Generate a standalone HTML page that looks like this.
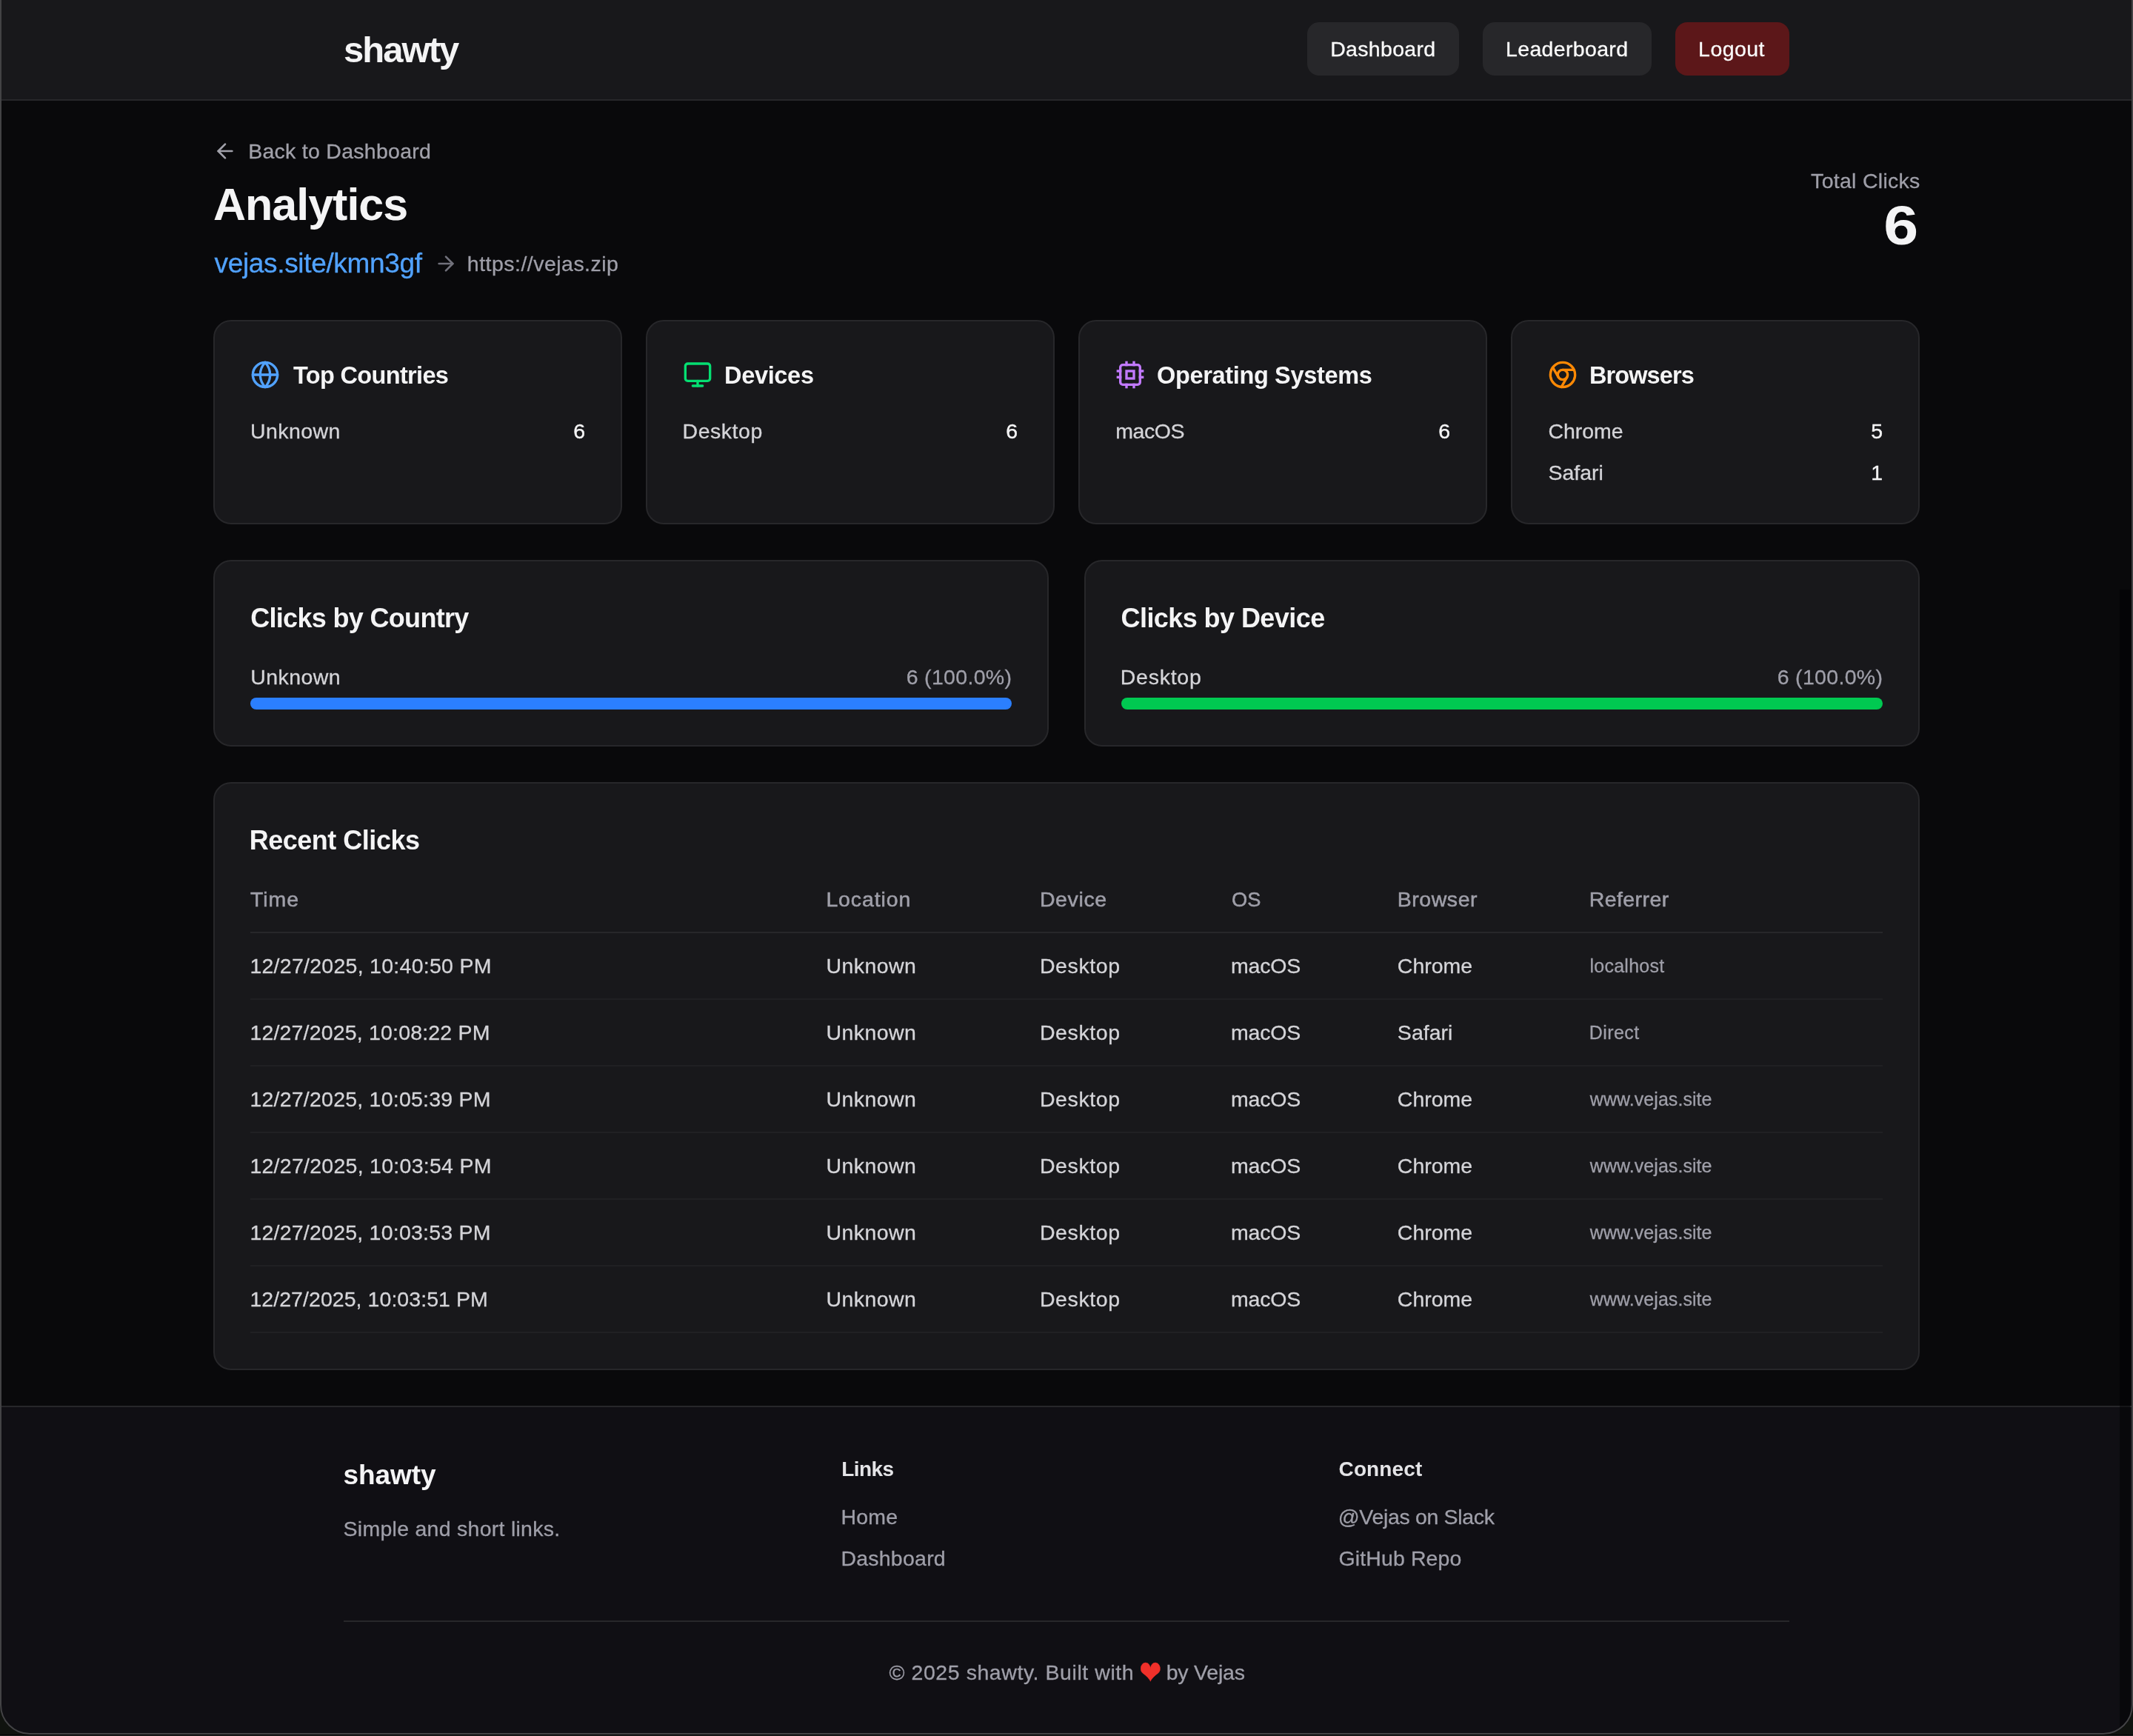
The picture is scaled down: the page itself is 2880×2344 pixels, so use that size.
<!DOCTYPE html>
<html lang="en">
<head>
<meta charset="utf-8">
<title>Analytics - shawty</title>
<style>
*{box-sizing:border-box;margin:0;padding:0}
html,body{width:2880px;height:2344px;background:#10130f;overflow:hidden}
body{font-family:"Liberation Sans",sans-serif;color:#f4f4f5;-webkit-font-smoothing:antialiased}
a{color:inherit;text-decoration:none}
#win{will-change:transform;position:absolute;left:0;top:0;width:2880px;height:2342px;background:#09090b;overflow:hidden;border-radius:0 0 40px 40px}
#frame{position:absolute;left:0;top:-4px;width:2880px;height:2346px;border:2px solid #434345;border-radius:0 0 40px 40px;pointer-events:none;z-index:10}
#edge{position:absolute;left:0;top:2342px;width:2880px;height:2px;background:linear-gradient(#000 50%,#222 50%)}
#track{position:absolute;left:2862px;top:796px;width:14px;height:1546px;background:rgba(0,0,0,.45);z-index:5}
.t{display:inline-block;white-space:nowrap}
/* header */
header{height:136px;background:#18181b;border-bottom:2px solid #27272a}
.hwrap{width:2048px;margin:0 auto;padding:0 48px;height:134px;display:flex;align-items:center;justify-content:space-between}
.logo{font-size:49px;line-height:64px;font-weight:700;color:#f4f4f5}
nav{display:flex;gap:32px;position:relative;top:-1px}
.btn{height:72px;border-radius:16px;background:#27272a;font-size:28.5px;line-height:40px;padding:16px 0;text-align:center;color:#fafafa}
.btn.red{background:#5c1719}
/* main */
main{width:2304px;margin:0 auto;padding:48px 0}
.top{display:flex;align-items:center;justify-content:space-between;margin-bottom:48px}
.back{display:flex;align-items:center;height:40px;font-size:28.5px;line-height:40px;color:#a1a1aa;margin-bottom:16px}
.back svg{width:32px;height:32px;margin-right:16px}
h1{font-size:61px;line-height:72px;font-weight:700;color:#f4f4f5}
.linkrow{display:flex;align-items:center;height:56px;margin-top:16px}
.linkrow .short{font-size:37px;line-height:56px;color:#51a2ff}
.linkrow svg{width:32px;height:32px;margin:0 16px;color:#71717b}
.linkrow .dest{font-size:28.5px;line-height:40px;color:#9f9fa9}
.total{text-align:right}
.total .lbl{font-size:28.5px;line-height:40px;color:#9f9fa9;display:block}
.total .num{font-size:74px;line-height:80px;font-weight:700;color:#f4f4f5;display:block}
.card{background:#18181b;border:2px solid #27272a;border-radius:24px;padding:48px}
.g4{display:grid;grid-template-columns:repeat(4,552px);gap:32px;margin-bottom:48px}
.g4 .card{height:276px}
.chead{display:flex;align-items:center;height:48px;margin-bottom:32px;font-size:32.5px;line-height:48px;font-weight:700;color:#f4f4f5}
.chead svg{width:40px;height:40px;margin-right:16px}
.row{display:flex;justify-content:space-between;height:40px;font-size:28.5px;line-height:40px;color:#d4d4d8}
.row+.row{margin-top:16px}
.row b{font-weight:400;color:#f4f4f5}
.g2{display:grid;grid-template-columns:repeat(2,1128px);gap:48px;margin-bottom:48px}
.g2 .card{height:252px}
h2 .t,.chead .t{position:relative;top:1px}
h2{font-size:36px;line-height:56px;font-weight:700;color:#f4f4f5;margin-bottom:32px}
.brow{display:flex;justify-content:space-between;height:40px;font-size:28.5px;line-height:40px;color:#d4d4d8;margin-bottom:8px}
.brow i{font-style:normal;color:#9f9fa9}
.bar{height:16px;border-radius:8px;background:#2b7fff}
.bar.g{background:#00c951}
.tcard{height:794px}
table{border-collapse:collapse;width:2204px;table-layout:fixed}
th{vertical-align:top;text-align:left;font-weight:400;font-size:28.5px;line-height:40px;color:#9f9fa9;padding:0 0 24px;border-bottom:2px solid #27272a;height:65px}
td{font-size:28.5px;line-height:40px;color:#d4d4d8;padding:24px 0;border-bottom:2px solid #202023;height:90px}
td.ref{font-size:25px;color:#9f9fa9}
/* footer */
footer{position:absolute;left:0;top:1898px;width:2880px;height:444px;background:#100f14;border-top:2px solid #27272a}
.fwrap{width:2048px;margin:0 auto;padding:64px 48px 0}
.fgrid{display:grid;grid-template-columns:repeat(3,608px);gap:64px;height:160px}
.flogo{font-size:37px;line-height:56px;font-weight:700;color:#f4f4f5;display:block;margin-bottom:24px}
.fdesc{font-size:28.5px;line-height:40px;color:#9f9fa9}
.fh{font-size:28px;line-height:40px;font-weight:700;color:#e4e4e7;display:block;margin-bottom:24px}
.fl{font-size:28.5px;line-height:40px;color:#9f9fa9;display:block;height:40px}
.fl+.fl{margin-top:16px}
.copy{margin-top:64px;border-top:2px solid #27272a;padding-top:48px;display:flex;padding-left:736px;font-size:28.5px;line-height:40px;color:#9f9fa9}
.heart{color:#f0302a;font-family:"DejaVu Sans",sans-serif;font-size:36px;line-height:40px;margin:0 6.5px 0 7px;vertical-align:top;position:relative;top:1px;transform:scaleY(1.25);transform-origin:50% 52%}

body{-webkit-text-stroke:.3px}
.logo,h1,h2,.chead,.total .num,.flogo,.fh{-webkit-text-stroke:0}
/* tuned letter-spacing */
th .t{-webkit-text-stroke:.55px currentColor}
.row b .t{-webkit-text-stroke:.4px currentColor}
#tnum{position:relative;top:1px;transform:scaleX(1.14);transform-origin:100% 50%;margin-right:1.5px}
/*TUNE*/
#logo{letter-spacing:-1.98px;margin-left:0.00px;}
#b1{letter-spacing:0.32px;margin-left:-0.32px;}
#b2{letter-spacing:0.34px;margin-left:-0.64px;}
#b3{letter-spacing:0.42px;margin-left:-2.08px;}
#back{letter-spacing:0.27px;margin-left:-0.80px;}
#h1{letter-spacing:-1.00px;margin-left:0.00px;}
#short{letter-spacing:-0.34px;margin-left:1.60px;}
#dest{letter-spacing:0.48px;margin-left:-2.88px;}
#tlbl{letter-spacing:0.28px;margin-right:-0.60px;}
#c1h{letter-spacing:-0.67px;margin-left:2.08px;}
#c1a{letter-spacing:0.42px;margin-left:0.00px;}
#c2h{letter-spacing:-0.32px;margin-left:0.00px;}
#c2a{letter-spacing:0.53px;margin-left:-0.48px;}
#c3h{letter-spacing:-0.34px;margin-left:0.00px;}
#c3a{letter-spacing:-0.48px;margin-left:0.32px;}
#c4h{letter-spacing:-0.91px;margin-left:0.00px;}
#c4a{letter-spacing:-0.03px;margin-left:0.48px;}
#c4b{letter-spacing:0.00px;margin-left:0.48px;}
#g1h{letter-spacing:-0.68px;margin-left:0.16px;}
#g1a{letter-spacing:0.45px;margin-left:0.16px;}
#g1n{letter-spacing:0.32px;margin-right:-0.32px;}
#g2h{letter-spacing:-0.57px;margin-left:-0.48px;}
#g2a{letter-spacing:0.75px;margin-left:-1.28px;}
#g2n{letter-spacing:0.32px;margin-right:-0.32px;}
#rh{letter-spacing:-0.49px;margin-left:-1.28px;}
#th1{letter-spacing:0.91px;margin-left:0.00px;}
#th2{letter-spacing:0.89px;margin-left:-0.64px;}
#th3{letter-spacing:0.64px;margin-left:-1.12px;}
#th5{letter-spacing:0.56px;margin-left:-0.32px;}
#th6{letter-spacing:0.43px;margin-left:-0.32px;}
.lo{letter-spacing:0.45px;margin-left:-0.64px;}
.de{letter-spacing:0.61px;margin-left:-1.12px;}
.os{letter-spacing:-0.16px;margin-left:-1.12px;}
.brC{letter-spacing:-0.03px;margin-left:-0.16px;}
.rfl{letter-spacing:0.26px;margin-left:0.48px;}
.brS{letter-spacing:0.03px;margin-left:-0.16px;}
.rfD{letter-spacing:0.45px;margin-left:-0.32px;}
.rfw{letter-spacing:0.06px;margin-left:0.80px;}
#flogo{letter-spacing:-0.06px;margin-left:-0.48px;}
#fdesc{letter-spacing:0.27px;margin-left:-0.48px;}
#fh1{letter-spacing:-0.56px;margin-left:0.16px;}
#fl1{letter-spacing:0.21px;margin-left:-0.64px;}
#fl2{letter-spacing:0.24px;margin-left:-0.64px;}
#fh2{letter-spacing:0.13px;margin-left:-0.48px;}
#fl3{letter-spacing:-0.33px;margin-left:-1.28px;}
#fl4{letter-spacing:0.11px;margin-left:-0.48px;}
#cp1{letter-spacing:0.56px;margin-left:0.48px;}
#cp2{letter-spacing:-0.20px;margin-left:-0.16px;}
#r0t{letter-spacing:0.27px;margin-left:-0.64px;}
#r1t{letter-spacing:0.18px;margin-left:-0.64px;}
#r2t{letter-spacing:0.23px;margin-left:-0.64px;}
#r3t{letter-spacing:0.27px;margin-left:-0.64px;}
#r4t{letter-spacing:0.23px;margin-left:-0.64px;}
#r5t{letter-spacing:0.06px;margin-left:-0.64px;}
/*ENDTUNE*/
#th4{transform:scaleX(.955);transform-origin:0 50%;margin-left:-.5px}
</style>
</head>
<body>
<div id="win">
<header>
  <div class="hwrap">
    <a class="logo"><span class="t" id="logo">shawty</span></a>
    <nav>
      <a class="btn" style="width:205px"><span class="t" id="b1">Dashboard</span></a>
      <a class="btn" style="width:228px"><span class="t" id="b2">Leaderboard</span></a>
      <a class="btn red" style="width:154px"><span class="t" id="b3">Logout</span></a>
    </nav>
  </div>
</header>
<main>
  <div class="top">
    <div>
      <a class="back"><svg viewBox="0 0 24 24" fill="none" stroke="currentColor" stroke-width="2" stroke-linecap="round" stroke-linejoin="round"><path d="m12 19-7-7 7-7"/><path d="M19 12H5"/></svg><span class="t" id="back">Back to Dashboard</span></a>
      <h1><span class="t" id="h1">Analytics</span></h1>
      <div class="linkrow"><a class="short"><span class="t" id="short">vejas.site/kmn3gf</span></a><svg viewBox="0 0 24 24" fill="none" stroke="currentColor" stroke-width="2" stroke-linecap="round" stroke-linejoin="round"><path d="M5 12h14"/><path d="m12 5 7 7-7 7"/></svg><span class="dest"><span class="t" id="dest">https://vejas.zip</span></span></div>
    </div>
    <div class="total"><span class="lbl"><span class="t" id="tlbl">Total Clicks</span></span><span class="num"><span class="t" id="tnum">6</span></span></div>
  </div>
  <div class="g4">
    <section class="card">
      <div class="chead"><svg viewBox="0 0 24 24" fill="none" stroke="#51a2ff" stroke-width="2" stroke-linecap="round" stroke-linejoin="round"><circle cx="12" cy="12" r="10"/><path d="M12 2a14.5 14.5 0 0 0 0 20 14.5 14.5 0 0 0 0-20"/><path d="M2 12h20"/></svg><span class="t" id="c1h">Top Countries</span></div>
      <div class="row"><span class="t" id="c1a">Unknown</span><b><span class="t" id="c1n">6</span></b></div>
    </section>
    <section class="card">
      <div class="chead"><svg viewBox="0 0 24 24" fill="none" stroke="#05df72" stroke-width="2" stroke-linecap="round" stroke-linejoin="round"><rect width="20" height="14" x="2" y="3" rx="2"/><line x1="8" x2="16" y1="21" y2="21"/><line x1="12" x2="12" y1="17" y2="21"/></svg><span class="t" id="c2h">Devices</span></div>
      <div class="row"><span class="t" id="c2a">Desktop</span><b><span class="t" id="c2n">6</span></b></div>
    </section>
    <section class="card">
      <div class="chead"><svg viewBox="0 0 24 24" fill="none" stroke="#c27aff" stroke-width="2" stroke-linecap="round" stroke-linejoin="round"><rect x="4" y="4" width="16" height="16" rx="2"/><rect x="9" y="9" width="6" height="6" stroke-linejoin="miter"/><g stroke-linecap="square"><path d="M9 2v2"/><path d="M15 2v2"/><path d="M9 20v2"/><path d="M15 20v2"/><path d="M20 9h2"/><path d="M20 14h2"/><path d="M2 9h2"/><path d="M2 14h2"/></g></svg><span class="t" id="c3h">Operating Systems</span></div>
      <div class="row"><span class="t" id="c3a">macOS</span><b><span class="t" id="c3n">6</span></b></div>
    </section>
    <section class="card">
      <div class="chead"><svg viewBox="0 0 24 24" fill="none" stroke="#ff8904" stroke-width="2" stroke-linecap="round" stroke-linejoin="round"><circle cx="12" cy="12" r="10"/><circle cx="12" cy="12" r="4"/><line x1="21.17" x2="12" y1="8" y2="8"/><line x1="3.95" x2="8.54" y1="6.06" y2="14"/><line x1="10.88" x2="15.46" y1="21.94" y2="14"/></svg><span class="t" id="c4h">Browsers</span></div>
      <div class="row"><span class="t" id="c4a">Chrome</span><b><span class="t" id="c4n">5</span></b></div>
      <div class="row"><span class="t" id="c4b">Safari</span><b><span class="t" id="c4m">1</span></b></div>
    </section>
  </div>
  <div class="g2">
    <section class="card">
      <h2><span class="t" id="g1h">Clicks by Country</span></h2>
      <div class="brow"><span class="t" id="g1a">Unknown</span><i><span class="t" id="g1n">6 (100.0%)</span></i></div>
      <div class="bar"></div>
    </section>
    <section class="card">
      <h2><span class="t" id="g2h">Clicks by Device</span></h2>
      <div class="brow"><span class="t" id="g2a">Desktop</span><i><span class="t" id="g2n">6 (100.0%)</span></i></div>
      <div class="bar g"></div>
    </section>
  </div>
  <section class="card tcard">
    <h2><span class="t" id="rh">Recent Clicks</span></h2>
    <table>
      <colgroup><col style="width:778px"><col style="width:289px"><col style="width:258px"><col style="width:224px"><col style="width:259px"><col style="width:396px"></colgroup>
      <thead><tr><th><span class="t" id="th1">Time</span></th><th><span class="t" id="th2">Location</span></th><th><span class="t" id="th3">Device</span></th><th><span class="t" id="th4">OS</span></th><th><span class="t" id="th5">Browser</span></th><th><span class="t" id="th6">Referrer</span></th></tr></thead>
      <tbody>
        <tr><td><span class="t tm" id="r0t">12/27/2025, 10:40:50 PM</span></td><td><span class="t lo">Unknown</span></td><td><span class="t de">Desktop</span></td><td><span class="t os">macOS</span></td><td><span class="t brC">Chrome</span></td><td class="ref"><span class="t rfl">localhost</span></td></tr>
        <tr><td><span class="t tm" id="r1t">12/27/2025, 10:08:22 PM</span></td><td><span class="t lo">Unknown</span></td><td><span class="t de">Desktop</span></td><td><span class="t os">macOS</span></td><td><span class="t brS">Safari</span></td><td class="ref"><span class="t rfD">Direct</span></td></tr>
        <tr><td><span class="t tm" id="r2t">12/27/2025, 10:05:39 PM</span></td><td><span class="t lo">Unknown</span></td><td><span class="t de">Desktop</span></td><td><span class="t os">macOS</span></td><td><span class="t brC">Chrome</span></td><td class="ref"><span class="t rfw">www.vejas.site</span></td></tr>
        <tr><td><span class="t tm" id="r3t">12/27/2025, 10:03:54 PM</span></td><td><span class="t lo">Unknown</span></td><td><span class="t de">Desktop</span></td><td><span class="t os">macOS</span></td><td><span class="t brC">Chrome</span></td><td class="ref"><span class="t rfw">www.vejas.site</span></td></tr>
        <tr><td><span class="t tm" id="r4t">12/27/2025, 10:03:53 PM</span></td><td><span class="t lo">Unknown</span></td><td><span class="t de">Desktop</span></td><td><span class="t os">macOS</span></td><td><span class="t brC">Chrome</span></td><td class="ref"><span class="t rfw">www.vejas.site</span></td></tr>
        <tr><td><span class="t tm" id="r5t">12/27/2025, 10:03:51 PM</span></td><td><span class="t lo">Unknown</span></td><td><span class="t de">Desktop</span></td><td><span class="t os">macOS</span></td><td><span class="t brC">Chrome</span></td><td class="ref"><span class="t rfw">www.vejas.site</span></td></tr>
      </tbody>
    </table>
  </section>
</main>
<footer>
  <div class="fwrap">
    <div class="fgrid">
      <div><a class="flogo"><span class="t" id="flogo">shawty</span></a><p class="fdesc"><span class="t" id="fdesc">Simple and short links.</span></p></div>
      <div><span class="fh"><span class="t" id="fh1">Links</span></span><a class="fl"><span class="t" id="fl1">Home</span></a><a class="fl"><span class="t" id="fl2">Dashboard</span></a></div>
      <div><span class="fh"><span class="t" id="fh2">Connect</span></span><a class="fl"><span class="t" id="fl3">@Vejas on Slack</span></a><a class="fl"><span class="t" id="fl4">GitHub Repo</span></a></div>
    </div>
    <div class="copy"><span class="t" id="cp1">© 2025 shawty. Built with</span><span class="t heart" id="cph">❤</span><span class="t" id="cp2">by Vejas</span></div>
  </div>
</footer>
<div id="track"></div>
</div>
<div id="edge"></div>
<div id="frame"></div>
</body>
</html>
